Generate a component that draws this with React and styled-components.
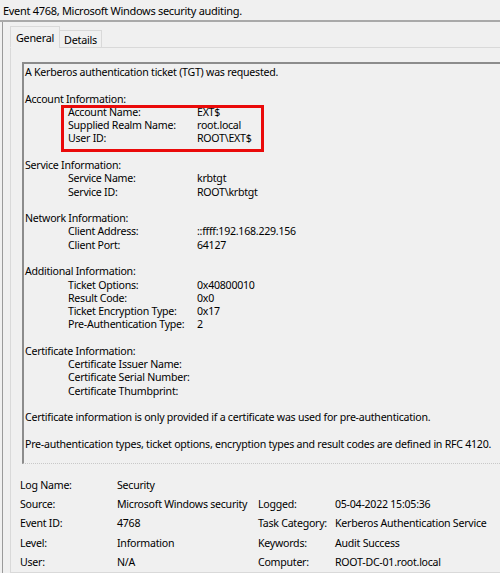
import React from 'react';
import styled, { createGlobalStyle } from 'styled-components';

const GlobalStyle = createGlobalStyle`
    html, body {
        margin: 0;
        padding: 0;
        background: #f0f0f0;
        overflow: hidden;
    }
    body {
        font-family: "Noto Sans", "Open Sans", sans-serif;
        color: #000;
        letter-spacing: -0.25px;
    }
`;

const Window = styled.div`
    width: 500px;
    height: 573px;
    overflow: hidden;
    display: flex;
    flex-direction: column;
    box-sizing: border-box;
    padding-left: 2px;
`;

const TitleBar = styled.div`
    height: 20px;
    display: flex;
    align-items: center;
    font-size: 11px;
    letter-spacing: -0.3px;
    border-bottom: 2px solid #a9a9a9;
    margin-left: -2px;
    padding-left: 3px;
`;

const Body = styled.div`
    flex: 1;
    display: flex;
    flex-direction: column;
    border-left: 1px solid #9a9a9a;
    padding-left: 7px;
`;

const TabStrip = styled.div`
    display: flex;
    align-items: flex-end;
    height: 25px;
    position: relative;
    z-index: 1;
`;

const Tab = styled.div`
    font-size: 10.8px;
    box-sizing: border-box;
    padding: 0 ${ props => props.active ? '5px' : '4px' };
    height: ${ props => props.active ? '22px' : '18px' };
    display: flex;
    align-items: center;
    background: #f0f0f0;
    border: 1px solid #d9d9d9;
    border-bottom: 1px solid ${ props => props.active ? '#f0f0f0' : '#d9d9d9' };
    margin-left: ${ props => props.active ? '0' : '-1px' };
    margin-bottom: -1px;
`;

const TabPanel = styled.div`
    flex: 1;
    border: 1px solid #d9d9d9;
    border-right: none;
    padding: 14px 0 0 11px;
    display: flex;
    flex-direction: column;
`;

const MessageBox = styled.div`
    position: relative;
    width: 500px;
    height: 402px;
    box-sizing: border-box;
    border-top: 2px solid #8c8c8c;
    border-left: 2px solid #8c8c8c;
    border-bottom: 1px dotted #c8c8c8;
    padding: 2px 0 0 1px;
    font-size: 10.6px;
    line-height: 13.29px;
    white-space: pre;
`;

const Line = styled.div`
    height: 13.29px;
    display: flex;
    padding-left: ${ props => props.indent ? '43px' : '0' };
`;

const Label = styled.span`
    width: 129px;
    flex-shrink: 0;
`;

const Highlight = styled.div`
    position: absolute;
    left: 37px;
    top: 41px;
    width: 203px;
    height: 47px;
    box-sizing: border-box;
    border: 3px solid #ea0a0a;
`;

const Summary = styled.div`
    display: grid;
    grid-template-columns: 97px 141px 77px auto;
    grid-auto-rows: 19.3px;
    align-items: center;
    margin: 11px 0 0 -2px;
    font-size: 10.6px;
    white-space: nowrap;
`;

const lines = [
    { text: 'A Kerberos authentication ticket (TGT) was requested.' },
    {},
    { text: 'Account Information:' },
    { label: 'Account Name:', value: 'EXT$' },
    { label: 'Supplied Realm Name:', value: 'root.local' },
    { label: 'User ID:', value: 'ROOT\\EXT$' },
    {},
    { text: 'Service Information:' },
    { label: 'Service Name:', value: 'krbtgt' },
    { label: 'Service ID:', value: 'ROOT\\krbtgt' },
    {},
    { text: 'Network Information:' },
    { label: 'Client Address:', value: '::ffff:192.168.229.156' },
    { label: 'Client Port:', value: '64127' },
    {},
    { text: 'Additional Information:' },
    { label: 'Ticket Options:', value: '0x40800010' },
    { label: 'Result Code:', value: '0x0' },
    { label: 'Ticket Encryption Type:', value: '0x17' },
    { label: 'Pre-Authentication Type:', value: '2' },
    {},
    { text: 'Certificate Information:' },
    { label: 'Certificate Issuer Name:', value: '' },
    { label: 'Certificate Serial Number:', value: '' },
    { label: 'Certificate Thumbprint:', value: '' },
    {},
    { text: 'Certificate information is only provided if a certificate was used for pre-authentication.' },
    {},
    { text: 'Pre-authentication types, ticket options, encryption types and result codes are defined in RFC 4120.' },
];

const summary = [
    ['Log Name:', 'Security', '', ''],
    ['Source:', 'Microsoft Windows security', 'Logged:', '05-04-2022 15:05:36'],
    ['Event ID:', '4768', 'Task Category:', 'Kerberos Authentication Service'],
    ['Level:', 'Information', 'Keywords:', 'Audit Success'],
    ['User:', 'N/A', 'Computer:', 'ROOT-DC-01.root.local'],
];

export default function App() {
    return (
        <Window>
            <GlobalStyle />
            <TitleBar>Event 4768, Microsoft Windows security auditing.</TitleBar>
            <Body>
                <TabStrip>
                    <Tab active>General</Tab>
                    <Tab>Details</Tab>
                </TabStrip>
                <TabPanel>
                    <MessageBox>
                        { lines.map((line, i) => (
                            line.label !== undefined ? (
                                <Line key={ i } indent>
                                    <Label>{ line.label }</Label>
                                    <span>{ line.value }</span>
                                </Line>
                            ) : (
                                <Line key={ i }>{ line.text || '' }</Line>
                            )
                        )) }
                        <Highlight />
                    </MessageBox>
                    <Summary>
                        { summary.map((row, r) => row.map((cell, c) => (
                            <span key={ `${r}-${c}` }>{ cell }</span>
                        ))) }
                    </Summary>
                </TabPanel>
            </Body>
        </Window>
    );
}
